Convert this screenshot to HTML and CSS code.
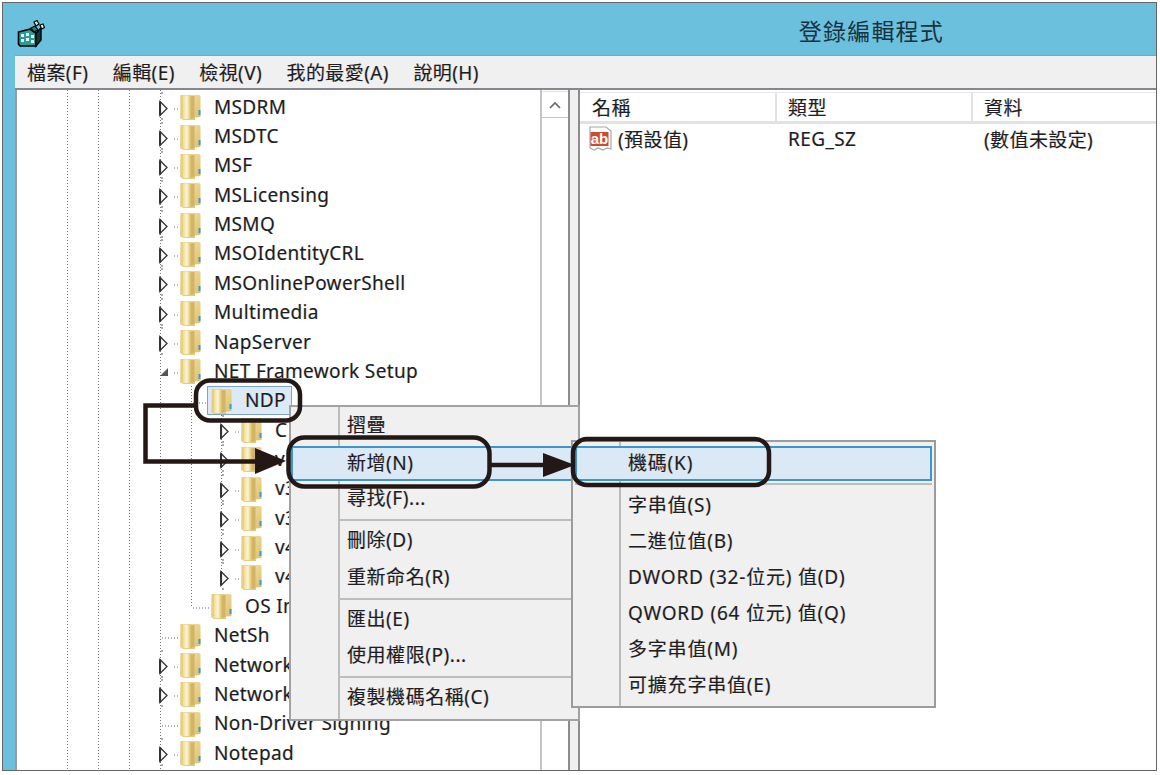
FILE: index.html
```html
<!DOCTYPE html>
<html lang="zh-Hant">
<head>
<meta charset="utf-8">
<title>登錄編輯程式</title>
<link rel="stylesheet" href="styles.css">
</head>
<body>
<svg class="defs" width="0" height="0" aria-hidden="true">
  <defs>
    <linearGradient id="fold" x1="0" y1="0" x2="1" y2="1">
      <stop offset="0" stop-color="#f4e6ae"/><stop offset="1" stop-color="#dcbf6c"/>
    </linearGradient>
    <linearGradient id="foldFront" x1="0" y1="0" x2="1" y2="0">
      <stop offset="0" stop-color="#f2dd95"/><stop offset=".6" stop-color="#fbf4d4"/><stop offset="1" stop-color="#e8cf85"/>
    </linearGradient>
    <symbol id="folder" viewBox="0 0 21 26">
      <path d="M0 1 H19 L20.500 2 V23 L15 23.500 V26 H3 L0 24 Z" fill="url(#fold)"/>
      <path d="M1 1 H9 L14.500 2 V25 L10 25.500 H3 L1 24 Z" fill="#e6cf85"/>
      <path d="M3 1.500 H9.500 V25 H3 Z" fill="url(#foldFront)"/>
      <path d="M10.500 2.500 L14.500 2 V24 L10.500 25 Z" fill="#d3b364"/>
      <path d="M18.500 16 h2 v5 h-2 Z" fill="#3b9ad0"/>
    </symbol>
    <symbol id="exp-closed" viewBox="0 0 21 29">
      <path d="M3 0 v2 M3 26 v2" stroke="#555" stroke-width="1" fill="none"/>
      <path d="M1 9.500 L8 16.500 L1 23.500 Z" fill="#fff" stroke="#333" stroke-width="1.300"/>
      <path d="M1 9.500 V23.500" stroke="#333" stroke-width="2.200"/>
      <path d="M15 17 h1 M18 17 h1" stroke="#777" stroke-width="1"/>
    </symbol>
    <symbol id="exp-open" viewBox="0 0 21 29">
      <path d="M9 12 V20 H1 Z" fill="#555"/>
      <path d="M15 17 h1 M18 17 h1" stroke="#777" stroke-width="1"/>
    </symbol>
    <symbol id="exp-leaf" viewBox="0 0 21 29">
      <path d="M3 17 H21" stroke="#666" stroke-width="1" stroke-dasharray="1 2"/>
    </symbol>
  </defs>
</svg>

<div class="window">
  <header class="titlebar">
    <svg class="appicon" viewBox="0 0 28 28" width="28" height="28" aria-hidden="true">
      <path d="M1.500 12 L13 9 L19 13 V26 H3 L1.500 24 Z" fill="#2c9c98" stroke="#000" stroke-width="1.600"/>
      <path d="M4 14 h3 v3 h-3 Z M9 13 h3 v3 h-3 Z M4 19 h3 v3 h-3 Z M9 18 h3 v3 h-3 Z M14 15 h3 v3 h-3 Z M14 20 h3 v3 h-3 Z" fill="#e6fafa"/>
      <path d="M19 13 V26 M13 9 L19 13" stroke="#000" stroke-width="2" fill="none"/>
      <path d="M19 13 L24 8 L24 20 L19 26 Z" fill="#0f3a3a" stroke="#000" stroke-width="1.400"/>
      <path d="M14 8 L18 6 L21 10 L17 12 Z" fill="#1d7f7c" stroke="#000" stroke-width="1.200"/>
      <path d="M17 2 L20 0.500 L22 4 L19 6 Z" fill="#d8f2f0" stroke="#000" stroke-width="1.200"/>
      <path d="M23 5 L26 4 L27.500 7.500 L24.500 9 Z" fill="#e6f8f6" stroke="#000" stroke-width="1.200"/>
    </svg>
    <h1 class="title">登錄編輯程式</h1>
  </header>
  <div class="body">
    <nav class="menubar">
      <span class="menu-item">檔案(F)</span>
      <span class="menu-item">編輯(E)</span>
      <span class="menu-item">檢視(V)</span>
      <span class="menu-item">我的最愛(A)</span>
      <span class="menu-item">說明(H)</span>
    </nav>
    <div class="panes">
      <section class="tree-pane">
        <div class="tree">
          <div class="row l1"><svg class="exp"><use href="#exp-closed"/></svg><svg class="folder"><use href="#folder"/></svg><span class="label">MSDRM</span></div>
          <div class="row l1"><svg class="exp"><use href="#exp-closed"/></svg><svg class="folder"><use href="#folder"/></svg><span class="label">MSDTC</span></div>
          <div class="row l1"><svg class="exp"><use href="#exp-closed"/></svg><svg class="folder"><use href="#folder"/></svg><span class="label">MSF</span></div>
          <div class="row l1"><svg class="exp"><use href="#exp-closed"/></svg><svg class="folder"><use href="#folder"/></svg><span class="label">MSLicensing</span></div>
          <div class="row l1"><svg class="exp"><use href="#exp-closed"/></svg><svg class="folder"><use href="#folder"/></svg><span class="label">MSMQ</span></div>
          <div class="row l1"><svg class="exp"><use href="#exp-closed"/></svg><svg class="folder"><use href="#folder"/></svg><span class="label">MSOIdentityCRL</span></div>
          <div class="row l1"><svg class="exp"><use href="#exp-closed"/></svg><svg class="folder"><use href="#folder"/></svg><span class="label">MSOnlinePowerShell</span></div>
          <div class="row l1"><svg class="exp"><use href="#exp-closed"/></svg><svg class="folder"><use href="#folder"/></svg><span class="label">Multimedia</span></div>
          <div class="row l1"><svg class="exp"><use href="#exp-closed"/></svg><svg class="folder"><use href="#folder"/></svg><span class="label">NapServer</span></div>
          <div class="row l1"><svg class="exp"><use href="#exp-open"/></svg><svg class="folder"><use href="#folder"/></svg><span class="label">NET Framework Setup</span></div>
          <div class="group-l2">
            <div class="row l2"><svg class="exp"><use href="#exp-leaf"/></svg><span class="selected"><svg class="folder"><use href="#folder"/></svg><span class="label">NDP</span></span></div>
            <div class="group-l3">
              <div class="row l3"><svg class="exp"><use href="#exp-closed"/></svg><svg class="folder"><use href="#folder"/></svg><span class="label">C</span></div>
              <div class="row l3"><svg class="exp"><use href="#exp-closed"/></svg><svg class="folder"><use href="#folder"/></svg><span class="label">v</span></div>
              <div class="row l3"><svg class="exp"><use href="#exp-closed"/></svg><svg class="folder"><use href="#folder"/></svg><span class="label">v3</span></div>
              <div class="row l3"><svg class="exp"><use href="#exp-closed"/></svg><svg class="folder"><use href="#folder"/></svg><span class="label">v3</span></div>
              <div class="row l3"><svg class="exp"><use href="#exp-closed"/></svg><svg class="folder"><use href="#folder"/></svg><span class="label">v4</span></div>
              <div class="row l3"><svg class="exp"><use href="#exp-closed"/></svg><svg class="folder"><use href="#folder"/></svg><span class="label">v4</span></div>
            </div>
            <div class="row l2"><svg class="exp"><use href="#exp-leaf"/></svg><svg class="folder"><use href="#folder"/></svg><span class="label">OS In</span></div>
          </div>
          <div class="row l1"><svg class="exp"><use href="#exp-leaf"/></svg><svg class="folder"><use href="#folder"/></svg><span class="label">NetSh</span></div>
          <div class="row l1"><svg class="exp"><use href="#exp-closed"/></svg><svg class="folder"><use href="#folder"/></svg><span class="label">Network</span></div>
          <div class="row l1"><svg class="exp"><use href="#exp-closed"/></svg><svg class="folder"><use href="#folder"/></svg><span class="label">Network</span></div>
          <div class="row l1"><svg class="exp"><use href="#exp-leaf"/></svg><svg class="folder"><use href="#folder"/></svg><span class="label">Non-Driver Signing</span></div>
          <div class="row l1"><svg class="exp"><use href="#exp-closed"/></svg><svg class="folder"><use href="#folder"/></svg><span class="label">Notepad</span></div>
        </div>
        <div class="scrollbar">
          <div class="scroll-up">
            <svg viewBox="0 0 12 8" width="12" height="8" aria-hidden="true"><path d="M1 7 L6 2 L11 7" fill="none" stroke="#666" stroke-width="1.600"/></svg>
          </div>
        </div>
      </section>
      <section class="list-pane">
        <div class="list-head">
          <span class="col col-name">名稱</span>
          <span class="col col-type">類型</span>
          <span class="col col-data">資料</span>
        </div>
        <div class="list-row">
          <span class="col col-name value">
            <svg class="ab" viewBox="0 0 24 26" width="24" height="26" aria-hidden="true">
              <path d="M2 1 H18 L23 5 V23 L19 22 L15 24 L10 22 L6 24 L2 22 Z" fill="#fff" stroke="#a8a8a8" stroke-width="1.200"/>
              <rect x="2.500" y="6" width="18" height="14" fill="#d2492f"/>
              <text class="ab-text" x="11.500" y="18">ab</text>
            </svg>
            <span>(預設值)</span>
          </span>
          <span class="col col-type">REG_SZ</span>
          <span class="col col-data">(數值未設定)</span>
        </div>
      </section>
    </div>
  </div>
</div>

<div class="ctx ctx-main">
  <div class="ctx-item strong">摺疊</div>
  <div class="ctx-item active">新增(N)</div>
  <div class="ctx-item">尋找(F)...</div>
  <div class="ctx-sep"></div>
  <div class="ctx-item">刪除(D)</div>
  <div class="ctx-item">重新命名(R)</div>
  <div class="ctx-sep"></div>
  <div class="ctx-item">匯出(E)</div>
  <div class="ctx-item">使用權限(P)...</div>
  <div class="ctx-sep"></div>
  <div class="ctx-item">複製機碼名稱(C)</div>
</div>

<div class="ctx ctx-sub">
  <div class="ctx-item active">機碼(K)</div>
  <div class="ctx-sep first"></div>
  <div class="ctx-item">字串值(S)</div>
  <div class="ctx-item">二進位值(B)</div>
  <div class="ctx-item">DWORD (32-位元) 值(D)</div>
  <div class="ctx-item">QWORD (64 位元) 值(Q)</div>
  <div class="ctx-item">多字串值(M)</div>
  <div class="ctx-item">可擴充字串值(E)</div>
</div>

<svg class="annot" viewBox="0 0 1160 775" width="1160" height="775" aria-hidden="true">
  <g fill="none" stroke="#231815" stroke-width="4.500">
    <rect x="196" y="380.500" width="104" height="40" rx="14"/>
    <rect x="288.500" y="437.500" width="201" height="49" rx="16"/>
    <rect x="573" y="439" width="196" height="46" rx="14"/>
    <path d="M196 405.500 H145.500 V461.500 H258"/>
    <path d="M490 465 H546"/>
  </g>
  <path d="M255 448 L286 461 L255 474 Z" fill="#231815"/>
  <path d="M543 453 L575 465 L543 477 Z" fill="#231815"/>
</svg>
</body>
</html>
```
FILE: styles.css
```css
html, body { margin: 0; padding: 0; background: #fff; }
body {
  width: 1160px;
  height: 775px;
  overflow: hidden;
  position: relative;
  font-family: "Noto Sans", "Noto Sans CJK TC", sans-serif;
  color: #1d1d22;
}
.defs { position: absolute; }

.window {
  box-sizing: border-box;
  width: 1155px;
  height: 769px;
  margin: 2px 0 0 2px;
  border: 1.500px solid #666;
  background: #6bc0de;
  display: flex;
  flex-direction: column;
  text-shadow: .5px 0 0 rgba(30,130,210,.3), -.5px 0 0 rgba(210,110,40,.3);
}
.titlebar {
  height: 52px;
  flex: none;
  display: flex;
  align-items: center;
  padding-left: 14px;
}
.appicon { margin-top: 10px; flex: none; }
.title {
  flex: 1;
  margin: 2px 0 0;
  font-size: 23px;
  font-weight: 400;
  letter-spacing: 1.200px;
  color: #17323f;
  text-shadow: none;
  white-space: nowrap;
  text-align: right;
  padding-right: 212px;
}
.body {
  flex: 1;
  min-height: 0;
  margin-left: 12px;
  display: flex;
  flex-direction: column;
  background: #f0f0f0;
  border-top: 1.500px solid #7aa9bf;
}
.menubar {
  height: 32px;
  flex: none;
  display: flex;
  align-items: center;
  gap: 24.500px;
  padding-left: 12px;
  font-size: 19px;
  letter-spacing: .4px;
  border-bottom: 2px solid #85878c;
}
.panes {
  flex: 1;
  min-height: 0;
  display: flex;
  gap: 8px;
  background: #f0f0f0;
}
.tree-pane {
  width: 555px;
  flex: none;
  display: flex;
  box-sizing: border-box;
  border-left: 2px solid #9a9a9a;
  border-right: 2px solid #8c8c8c;
  background: #fff;
  overflow: hidden;
}
.tree {
  flex: 1;
  min-width: 0;
  padding-top: 2px;
  font-size: 19px;
  letter-spacing: .35px;
  background-image:
    repeating-linear-gradient(to bottom, #777 0 1px, transparent 1px 3px),
    repeating-linear-gradient(to bottom, #777 0 1px, transparent 1px 3px),
    repeating-linear-gradient(to bottom, #777 0 1px, transparent 1px 3px),
    repeating-linear-gradient(to bottom, #777 0 1px, transparent 1px 3px);
  background-size: 1px 100%;
  background-repeat: no-repeat;
  background-position: 50px 0, 81px 0, 112px 0, 143px 0;
  overflow: hidden;
}
.row {
  height: 29.360px;
  display: flex;
  align-items: center;
  white-space: nowrap;
  box-sizing: border-box;
}
.row.l1 { padding-left: 142px; }
.row.l2 { padding-left: 173px; }
.row.l3 { padding-left: 203px; }
.group-l2 {
  background-image: repeating-linear-gradient(to bottom, #777 0 1px, transparent 1px 3px);
  background-size: 1px calc(100% - 14px);
  background-repeat: no-repeat;
  background-position: 174px 0;
}
.group-l3 {
  background-image: repeating-linear-gradient(to bottom, #777 0 1px, transparent 1px 3px);
  background-size: 1px calc(100% - 14px);
  background-repeat: no-repeat;
  background-position: 204px 0;
}
.exp { width: 21px; height: 29px; flex: none; }
.folder { width: 21px; height: 26px; flex: none; margin-top: 1px; }
.label { margin-left: 13px; line-height: 1; margin-top: 1px; }
.selected {
  display: flex;
  align-items: center;
  height: 29px;
  box-sizing: border-box;
  margin-left: -4px;
  padding: 0 5px 0 3px;
  background: #dce9f7;
  border: 1px solid #7da2ce;
}
.scrollbar {
  width: 26px;
  flex: none;
  border-left: 2px solid #c4c4c4;
  background: #fff;
}
.scroll-up {
  height: 27px;
  display: flex;
  align-items: center;
  justify-content: center;
  border-bottom: 1.500px solid #c4c4c4;
  margin-top: 1px;
  border-top: 1px solid #e4e4e4;
  box-sizing: border-box;
}

.list-pane {
  flex: 1;
  min-width: 0;
  background: #fff;
  border-left: 2px solid #8c8c8c;
  font-size: 19px;
  letter-spacing: .4px;
}
.list-head {
  height: 32px;
  margin-top: 2px;
  box-sizing: border-box;
  display: flex;
  align-items: center;
  border-top: 1px solid #e8e8e8;
  border-bottom: 3px solid #e2e2e2;
}
.list-head .col { height: 100%; display: flex; align-items: center; box-sizing: border-box; border-right: 2px solid #e2e2e2; }
.list-head .col-data { border-right: 0; }
.list-head .col-name { padding-left: 12px; }
.col { padding-left: 11px; box-sizing: border-box; flex: none; }
.col-name { width: 197px; }
.col-type { width: 196px; }
.col-data { flex: 1; }
.list-row { display: flex; align-items: center; height: 29px; }
.value { display: flex; align-items: center; padding-left: 8px; gap: 6px; }
.ab { flex: none; }
.ab-text {
  font-family: "Liberation Sans", sans-serif;
  font-size: 15px;
  font-weight: 700;
  letter-spacing: 0;
  fill: #fff;
  text-anchor: middle;
  text-shadow: none;
}

.ctx {
  position: absolute;
  box-sizing: border-box;
  background-color: #f0f0f0;
  background-image: linear-gradient(#bcbcbc, #bcbcbc);
  background-size: 2px 100%;
  background-repeat: no-repeat;
  font-size: 19px;
  letter-spacing: .55px;
  text-shadow: .5px 0 0 rgba(30,130,210,.3), -.5px 0 0 rgba(210,110,40,.3);
  white-space: nowrap;
}
.ctx-main {
  left: 289px;
  top: 405px;
  width: 291px;
  height: 316px;
  border: 2px solid #a2a2a2;
  padding: 1px 0;
  background-position: 47px 0;
}
.ctx-sub {
  left: 571px;
  top: 440px;
  width: 365px;
  height: 268px;
  border: 2px solid #9c9c9c;
  padding: 4px 2px 0;
  background-position: 46px 0;
  letter-spacing: .8px;
}
.ctx-item {
  height: 36.200px;
  line-height: 35px;
  padding-left: 56px;
  box-sizing: border-box;
}
.ctx-sub .ctx-item { padding-left: 53px; height: 36px; }
.ctx-item.active {
  height: 35px;
  background: #dbe8f6;
  border: 2px solid #3a96cc;
  border-right: 0;
  line-height: 30px;
  padding-left: 54px;
}
.ctx-main .ctx-item.active { margin: 2px 0 0; width: 282px; }
.ctx-sub .ctx-item.active { height: 35px; border-right: 2px solid #3a96cc; padding-left: 51px; }
.ctx-sep {
  height: 2px;
  margin: 2px 0 2px 47px;
  background: #bdbdbd;
}
.ctx-sep.first { margin: 2px 0 3px 0; }

.annot { position: absolute; left: 0; top: 0; pointer-events: none; }
```
